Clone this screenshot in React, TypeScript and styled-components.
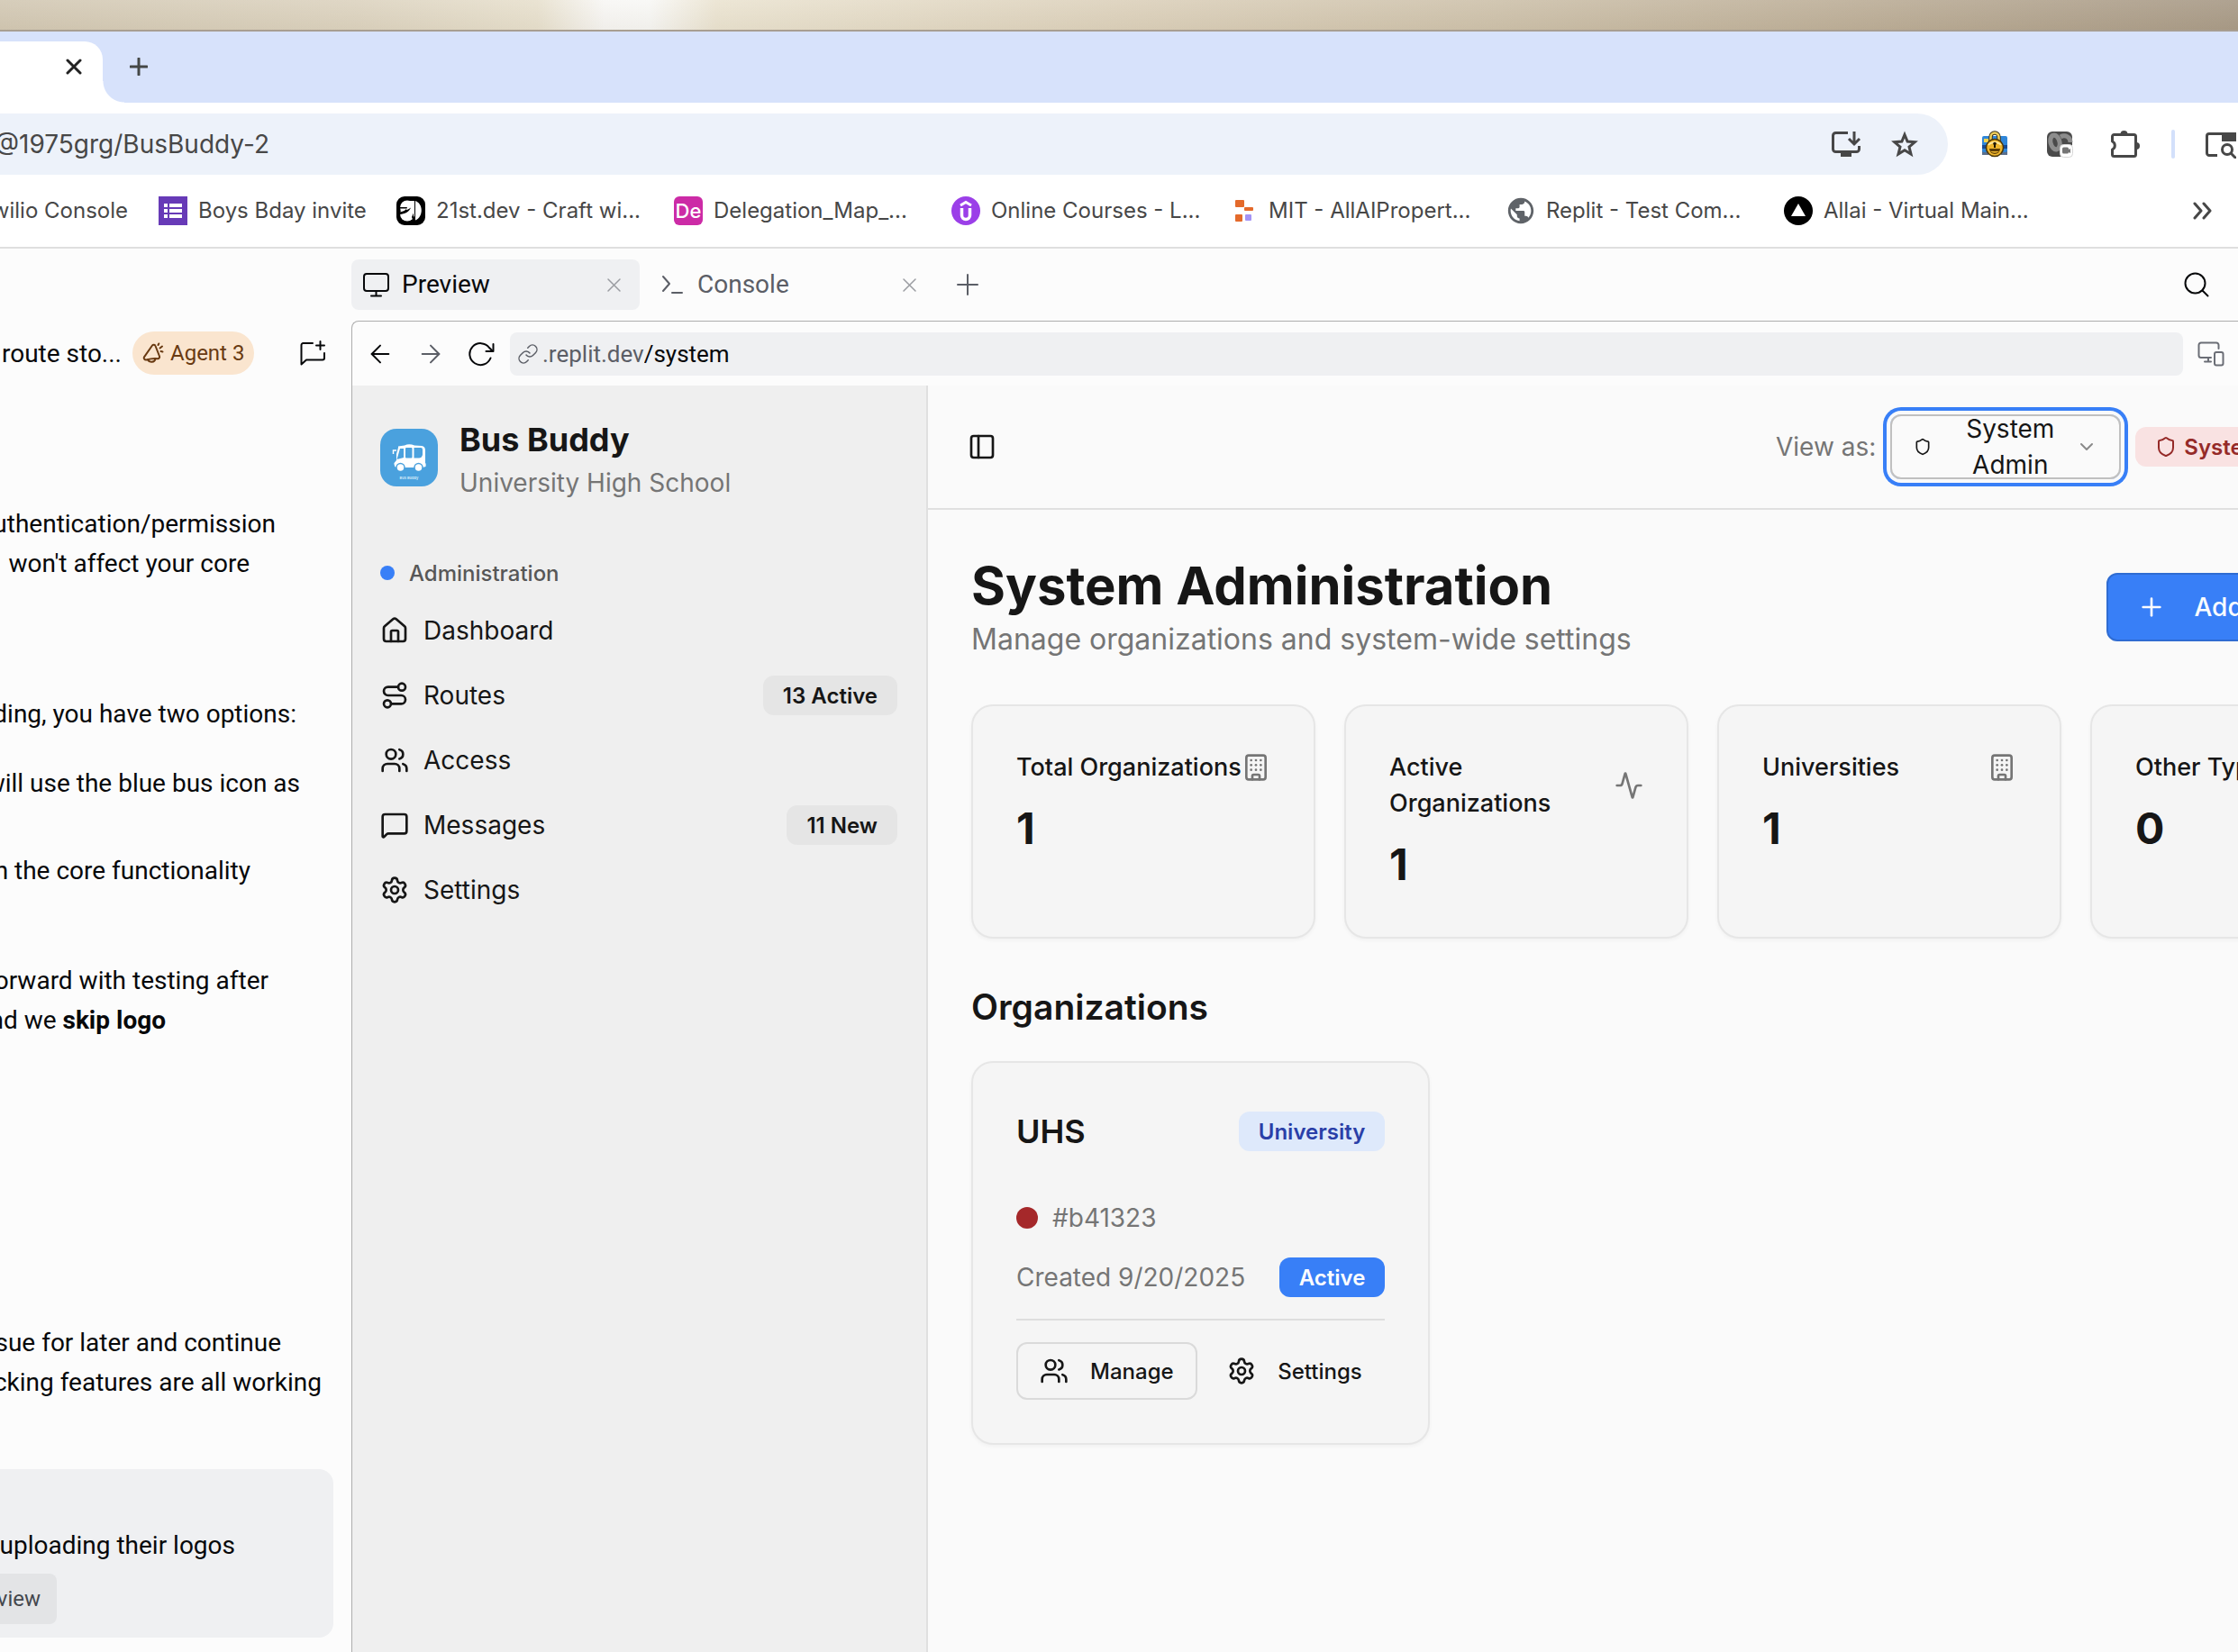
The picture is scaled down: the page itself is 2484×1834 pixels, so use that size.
import React from "react";
import styled, { createGlobalStyle } from "styled-components";
import {
  Activity,
  ArrowLeft,
  ArrowRight,
  Building,
  ChevronDown,
  House,
  MessageSquare,
  PanelLeft,
  Plus,
  Route,
  Settings,
  Shield,
  Users,
} from "lucide-react";
import { MdPublic } from "react-icons/md";

const inter = `Inter, "Liberation Sans", sans-serif`;
const workspaceFont = `Roboto, "Liberation Sans", sans-serif`;

const GlobalStyle = createGlobalStyle`
  *, *::before, *::after { box-sizing: border-box; }
  body { margin: 0; background: #fcfcfc; }
  h1, h2, h3, p, ul { margin: 0; padding: 0; }
  ul { list-style: none; }
  button, input, select { font: inherit; color: inherit; border: 0; padding: 0; margin: 0; background: none; outline: 0; }
  button { cursor: pointer; }
  a { color: inherit; text-decoration: none; }
  svg { display: block; flex: none; }
`;

/* ---------- Browser window ---------- */

const Screen = styled.div`
  display: flex;
  flex-direction: column;
  height: 100vh;
  overflow: hidden;
  font-family: ${inter};
`;

const Desktop = styled.div`
  flex: none;
  height: 35px;
  border-bottom: 2px solid #a89e91;
  background:
    linear-gradient(to bottom, rgba(255, 255, 255, 0.08), rgba(120, 100, 60, 0.06)),
    linear-gradient(
      to right,
      #d3c9b5 0%,
      #ddd4c1 16%,
      #e8e1cf 24%,
      #f8f7f5 27%,
      #f8f8f6 29%,
      #ebe4d2 32%,
      #ddd2bd 50%,
      #cec2ac 67%,
      #bdaf99 83%,
      #a99b88 100%
    );
`;

const TabStrip = styled.div`
  flex: none;
  display: flex;
  align-items: flex-end;
  height: 79px;
  background: #d7e2fb;
`;

const BrowserTab = styled.div`
  position: relative;
  display: flex;
  align-items: center;
  justify-content: flex-end;
  width: 114px;
  height: 68px;
  padding: 0 23px 12px 0;
  border-radius: 0 20px 0 0;
  background: #fff;
  color: #222;

  &::after {
    content: "";
    position: absolute;
    left: 100%;
    bottom: 0;
    width: 24px;
    height: 24px;
    background: radial-gradient(circle at 100% 0, transparent 23px, #fff 24px);
  }
`;

const NewTab = styled.button`
  display: flex;
  height: 68px;
  padding: 18px 0 0 30px;
  color: #444746;
`;

const Toolbar = styled.div`
  flex: none;
  display: flex;
  align-items: center;
  height: 92px;
  background: #fff;
`;

const Omnibox = styled.div`
  flex: 1;
  display: flex;
  align-items: center;
  gap: 32px;
  height: 68px;
  padding-right: 32px;
  margin-right: 36px;
  border-radius: 0 34px 34px 0;
  background: #edf2fa;
  color: #474747;
`;

const AddressInput = styled.input`
  flex: 1;
  min-width: 0;
  text-indent: -6px;
  font-size: 28px;
  line-height: 40px;
`;

const ToolbarIcons = styled.div`
  display: flex;
  align-items: center;
  gap: 40px;
  width: 286px;
  overflow: hidden;
  color: #474747;
`;

const ToolbarDivider = styled.span`
  flex: none;
  width: 4px;
  height: 32px;
  margin: 0 -8px 0 -6px;
  border-radius: 2px;
  background: #d3e0fb;
`;

const Bookmarks = styled.nav`
  flex: none;
  display: flex;
  align-items: center;
  height: 70px;
  padding: 0 28px 12px 0;
  border-bottom: 2px solid #dfdfdf;
  background: #fff;
  color: #474747;
  font-size: 24px;
  line-height: 32px;
`;

const Bookmark = styled.a<{ $width?: number }>`
  flex: none;
  display: flex;
  align-items: center;
  gap: 12px;
  width: ${(p) => p.$width ?? 308}px;
  white-space: nowrap;
`;

const CutBookmark = styled.a`
  flex: none;
  display: flex;
  justify-content: flex-end;
  width: 142px;
  margin-right: 34px;
  overflow: hidden;
  white-space: nowrap;
`;

const Favicon = styled.span<{ $bg?: string; $radius?: number }>`
  flex: none;
  display: flex;
  align-items: center;
  justify-content: center;
  width: 32px;
  height: 32px;
  border-radius: ${(p) => p.$radius ?? 0}px;
  background: ${(p) => p.$bg ?? "transparent"};
  color: #fff;
  font-size: 22px;
  font-weight: 500;
`;

const MoreBookmarks = styled.button`
  margin-left: auto;
  color: #474747;
`;

/* ---------- Workspace ---------- */

const Workspace = styled.div`
  flex: 1;
  display: flex;
  min-height: 0;
  background: #fcfcfc;
  color: #07080a;
  font-family: ${workspaceFont};
`;

const Chat = styled.section`
  flex: none;
  width: 390px;
  padding-top: 92px;
  overflow: hidden;
`;

const ChatHeader = styled.div`
  display: flex;
  align-items: center;
  height: 48px;
  padding-right: 29px;
`;

const ChatTitle = styled.span`
  display: flex;
  justify-content: flex-end;
  width: 135px;
  margin-right: 12px;
  overflow: hidden;
  white-space: nowrap;
  font-size: 28px;
`;

const AgentPill = styled.button`
  display: flex;
  align-items: center;
  gap: 7px;
  height: 48px;
  padding: 0 11px;
  border-radius: 24px;
  background: #fae5cf;
  color: #693a12;
  font-size: 24px;
  white-space: nowrap;
`;

const NewChat = styled.button`
  margin-left: auto;
`;

const Message = styled.p<{ $top: number }>`
  margin-top: ${(p) => p.$top}px;
  font-size: 28px;
  line-height: 44px;
`;

const Line = styled.span<{ $end: number }>`
  display: flex;
  justify-content: flex-end;
  width: ${(p) => p.$end}px;
  overflow: hidden;
  white-space: pre;
`;

const Checkpoint = styled.div`
  width: 370px;
  margin-top: 74px;
  padding: 63px 0 15px;
  border-radius: 0 16px 16px 0;
  background: #eff0f2;
  font-size: 28px;
  line-height: 44px;
`;

const ViewButton = styled.button`
  display: flex;
  align-items: center;
  justify-content: flex-end;
  width: 63px;
  height: 56px;
  margin-top: 9px;
  padding-right: 18px;
  border-radius: 0 8px 8px 0;
  background: #e3e4e6;
  color: #44474d;
  font-size: 24px;
  overflow: hidden;
`;

const Pane = styled.section`
  flex: 1;
  min-width: 0;
  display: flex;
  flex-direction: column;
`;

const PaneTabs = styled.div`
  flex: none;
  display: flex;
  align-items: center;
  height: 80px;
  padding-right: 32px;
`;

const PaneTab = styled.div<{ $active?: boolean }>`
  display: flex;
  align-items: center;
  width: ${(p) => (p.$active ? 320 : 336)}px;
  height: 56px;
  padding: ${(p) => (p.$active ? "0 20px 0 12px" : "0 28px 0 24px")};
  border-radius: 8px;
  background: ${(p) => (p.$active ? "#eff0f2" : "transparent")};
  color: ${(p) => (p.$active ? "#07080a" : "#5b5e66")};
`;

const PaneTabButton = styled.button`
  flex: 1;
  display: flex;
  align-items: center;
  gap: 12px;
  font-size: 28px;
  line-height: 40px;
`;

const CloseButton = styled.button`
  color: #9a9ca1;
`;

const PaneAdd = styled.button`
  margin-left: 16px;
  color: #5b5e66;
`;

const PaneSearch = styled.button`
  margin-left: auto;
`;

const PreviewFrame = styled.div`
  flex: 1;
  min-height: 0;
  display: flex;
  flex-direction: column;
  border: solid #adadad;
  border-width: 1px 0 0 1px;
  border-top-left-radius: 8px;
  overflow: hidden;
`;

const PreviewBar = styled.div`
  flex: none;
  display: flex;
  align-items: center;
  height: 71px;
  padding: 0 15px 0 15px;
`;

const NavButton = styled.button<{ $muted?: boolean }>`
  flex: none;
  display: flex;
  justify-content: center;
  width: 32px;
  margin-right: 24px;
  color: ${(p) => (p.$muted ? "#5b5e66" : "#07080a")};
`;

const UrlBar = styled.label`
  flex: 1;
  display: flex;
  align-items: center;
  height: 48px;
  margin: 0 16px 0 -8px;
  padding-left: 8px;
  border-radius: 8px;
  background: #eff0f2;
  color: #5b5e66;
  font-size: 26px;
  line-height: 36px;
`;

const UrlHost = styled.span`
  margin-left: 4px;
`;

const UrlInput = styled.input`
  flex: 1;
  min-width: 0;
  color: #07080a;
`;

const DeviceButton = styled.button`
  color: #6b6e76;
`;

/* ---------- Bus Buddy app ---------- */

const AppViewport = styled.div`
  flex: 1;
  min-height: 0;
  display: flex;
  overflow: hidden;
  color: #161616;
  font-family: ${inter};
`;

const Sidebar = styled.aside`
  flex: none;
  width: 639px;
  border-right: 2px solid #e0e0e0;
  background: #efefef;
`;

const Brand = styled.div`
  display: flex;
  align-items: center;
  gap: 24px;
  padding: 32px 31px;
`;

const BrandName = styled.h2`
  font-size: 36px;
  line-height: 56px;
  font-weight: 700;
`;

const Muted = styled.p`
  color: #757575;
  font-size: 28px;
  line-height: 40px;
  white-space: nowrap;
`;

const Menu = styled.nav`
  padding: 16px 32px 16px 31px;
`;

const MenuLabel = styled.div`
  display: flex;
  align-items: center;
  gap: 16px;
  height: 64px;
  color: #575757;
  font-size: 24px;
  font-weight: 500;
`;

const Dot = styled.span<{ $size: number; $color: string }>`
  flex: none;
  width: ${(p) => p.$size}px;
  height: ${(p) => p.$size}px;
  border-radius: 50%;
  background: ${(p) => p.$color};
`;

const MenuList = styled.ul`
  display: flex;
  flex-direction: column;
  gap: 8px;
`;

const MenuItem = styled.a`
  display: flex;
  align-items: center;
  gap: 16px;
  height: 64px;
  font-size: 28px;
`;

const Badge = styled.span<{ $tone?: "blue" | "sky" | "red" }>`
  flex: none;
  display: inline-flex;
  align-items: center;
  gap: 8px;
  height: 44px;
  margin-left: auto;
  padding: 0 22px;
  border-radius: 12px;
  font-size: 24px;
  font-weight: 600;
  white-space: nowrap;
  background: ${(p) =>
    p.$tone === "blue" ? "#387ff7" : p.$tone === "sky" ? "#dee9fb" : p.$tone === "red" ? "#f9e2e2" : "#e5e5e5"};
  color: ${(p) =>
    p.$tone === "blue" ? "#fbfcfe" : p.$tone === "sky" ? "#2a3fa8" : p.$tone === "red" ? "#952a28" : "#161616"};
`;

const Main = styled.main`
  flex: 1;
  min-width: 1720px;
  background: #fafafa;
`;

const MainHeader = styled.header`
  display: flex;
  align-items: center;
  justify-content: space-between;
  height: 138px;
  padding: 0 48px 0 44px;
  border-bottom: 2px solid #e0e0e0;
`;

const IconButton = styled.button`
  color: #161616;
`;

const ViewAs = styled.div`
  flex: 0 0 731px;
  display: flex;
  align-items: center;

  ${Badge} {
    margin-left: 16px;
  }
`;

const ViewAsLabel = styled.label`
  margin-right: 16px;
  color: #757575;
  font-size: 28px;
  line-height: 40px;
`;

const SelectBox = styled.div`
  position: relative;
  display: flex;
  align-items: center;
  width: 256px;
  height: 72px;
  padding: 0 24px;
  border: 2px solid #c0c0c0;
  border-radius: 12px;
  box-shadow: 0 0 0 4px #fafafa, 0 0 0 8px #387ff7;
  font-size: 28px;
  line-height: 40px;
`;

const SelectValue = styled.span`
  flex: 1;
  padding-left: 14px;
  text-align: center;
`;

const NativeSelect = styled.select`
  position: absolute;
  inset: 0;
  width: 100%;
  height: 100%;
  opacity: 0;
  cursor: pointer;
`;

const Content = styled.div`
  display: flex;
  flex-direction: column;
  gap: 48px;
  padding: 48px;
`;

const TitleRow = styled.div`
  display: flex;
  align-items: center;
  justify-content: space-between;
`;

const PageTitle = styled.h1`
  font-size: 58px;
  line-height: 72px;
  font-weight: 700;
`;

const Subtitle = styled.p`
  color: #757575;
  font-size: 32px;
  line-height: 48px;
`;

const PrimaryButton = styled.button`
  display: flex;
  align-items: center;
  gap: 31px;
  height: 76px;
  padding: 0 32px;
  border: 2px solid #2f6cd2;
  border-radius: 12px;
  background: #387ff7;
  color: #fbfcfe;
  font-size: 28px;
  font-weight: 500;
  white-space: nowrap;
`;

const Stats = styled.div`
  display: grid;
  grid-template-columns: repeat(4, 1fr);
  gap: 32px;
`;

const Card = styled.article`
  padding: 48px;
  border: 2px solid #e6e6e6;
  border-radius: 24px;
  background: #f5f5f5;
  box-shadow: 0 2px 4px rgba(0, 0, 0, 0.04);
`;

const StatHead = styled.div`
  display: flex;
  align-items: center;
  justify-content: space-between;
  padding-bottom: 16px;
  color: #757575;
`;

const StatTitle = styled.h3`
  color: #161616;
  font-size: 27px;
  line-height: 40px;
  font-weight: 500;
`;

const StatValue = styled.div`
  font-size: 48px;
  line-height: 64px;
  font-weight: 700;
`;

const Section = styled.section`
  display: flex;
  flex-direction: column;
  gap: 32px;
`;

const SectionTitle = styled.h2`
  font-size: 39px;
  line-height: 56px;
  font-weight: 600;
`;

const Orgs = styled.div`
  display: grid;
  grid-template-columns: repeat(3, 1fr);
  gap: 48px;
`;

const OrgHead = styled.div`
  display: flex;
  align-items: center;
  height: 56px;
  margin-bottom: 48px;
`;

const OrgName = styled.h3`
  font-size: 36px;
  line-height: 56px;
  font-weight: 600;
`;

const OrgRow = styled.div`
  display: flex;
  align-items: center;
  gap: 16px;
  margin-bottom: 24px;
`;

const OrgActions = styled.div`
  display: flex;
  gap: 8px;
  padding-top: 24px;
  border-top: 2px solid #dedede;
`;

const ActionButton = styled.button<{ $outline?: boolean }>`
  flex: 1;
  display: flex;
  align-items: center;
  justify-content: center;
  gap: 24px;
  height: 64px;
  border: 2px solid ${(p) => (p.$outline ? "#dadada" : "transparent")};
  border-radius: 12px;
  font-size: 24px;
  font-weight: 500;
`;

/* ---------- Drawings ---------- */

const Stroke = ({ w, h, sw = 2, children }: { w: number; h: number; sw?: number; children: React.ReactNode }) => (
  <svg
    width={w}
    height={h}
    viewBox={`0 0 ${w} ${h}`}
    fill="none"
    stroke="currentColor"
    strokeWidth={sw}
    strokeLinecap="round"
    strokeLinejoin="round"
    aria-hidden="true"
  >
    {children}
  </svg>
);

const Cross = ({ size, sw }: { size: number; sw: number }) => (
  <Stroke w={size} h={size} sw={sw}>
    <path d={`M2 2L${size - 2} ${size - 2}M${size - 2} 2L2 ${size - 2}`} />
  </Stroke>
);

const PlusMark = ({ size, sw }: { size: number; sw: number }) => (
  <Stroke w={size} h={size} sw={sw}>
    <path d={`M${size / 2} 1V${size - 1}M1 ${size / 2}H${size - 1}`} />
  </Stroke>
);

const InstallIcon = () => (
  <svg width="34" height="30" viewBox="0 0 34 30" fill="none" stroke="currentColor" strokeWidth="3" aria-hidden="true">
    <path d="M19 2.5H5.5a3 3 0 0 0-3 3V20.5a3 3 0 0 0 3 3H28.5a3 3 0 0 0 3-3V17" />
    <path d="M11 26.5H23" strokeWidth="5" />
    <path d="M26 1V14.5M20 9L26 15L32 9" />
  </svg>
);

const StarIcon = () => (
  <svg width="32" height="32" viewBox="0 0 32 32" fill="none" stroke="currentColor" strokeWidth="3" aria-hidden="true">
    <path d="M16 5.5L19.1 13.1L27.2 13.8L21 19L23 27L16 22.7L9 27L11 19L4.800 13.8L12.9 13.1z" />
  </svg>
);

const LockCardIcon = () => (
  <svg width="32" height="32" viewBox="0 0 32 32" aria-hidden="true">
    <rect x="2" y="23" width="7" height="5" fill="#5b6f8c" />
    <rect x="23" y="23" width="7" height="5" fill="#5b6f8c" />
    <rect x="2" y="7" width="28" height="18" rx="2" fill="#2f86d8" />
    <rect x="2" y="17" width="28" height="4" fill="#174a94" />
    <rect x="4" y="10" width="5" height="4" fill="#f3d34e" />
    <path d="M11.5 13V8a4.500 4.500 0 0 1 9 0v5" fill="none" stroke="#40341a" strokeWidth="4.500" />
    <path d="M11.5 13V8a4.500 4.500 0 0 1 9 0v5" fill="none" stroke="#f0cf5c" strokeWidth="2.500" />
    <circle cx="16" cy="20" r="9.500" fill="#efb62d" stroke="#4a3508" strokeWidth="1.500" />
    <path d="M10 21h12a6 6 0 0 1-12 0z" fill="#5d3d06" />
    <path d="M11 24a6 4 0 0 0 10 0z" fill="#efb62d" />
    <path d="M9 17a8 6 0 0 1 14 0" fill="none" stroke="#ffe9a0" strokeWidth="2" />
    <circle cx="16" cy="15.500" r="1.800" fill="#1e1604" />
    <rect x="15" y="15" width="2" height="5" fill="#1e1604" />
  </svg>
);

const RecorderIcon = () => (
  <svg width="32" height="32" viewBox="0 0 32 32" aria-hidden="true">
    <rect x="2" y="2" width="28" height="28" rx="6" fill="#4a4a4a" />
    <ellipse cx="11" cy="14" rx="5" ry="8" fill="none" stroke="#8d8d8d" strokeWidth="5" transform="rotate(-14 11 14)" />
    <path d="M17 8c5-3 11 0 11 6" fill="none" stroke="#8d8d8d" strokeWidth="5" />
    <rect x="16.500" y="16.500" width="14" height="14" rx="4" fill="#fff" stroke="#d6d6d6" />
    <rect x="19" y="19.500" width="7" height="7" rx="1.500" fill="#757575" />
    <path d="M26 22l2-1v5l-2-1z" fill="#757575" />
  </svg>
);

const ExtensionIcon = () => (
  <svg width="34" height="32" viewBox="-1 0 34 32" aria-hidden="true">
    <path
      d="M3.500 5.500h22a2 2 0 0 1 2 2v20a2 2 0 0 1-2 2h-22a2 2 0 0 1-2-2v-5.500a5 5 0 0 0 0-9v-5.500a2 2 0 0 1 2-2z"
      fill="none"
      stroke="currentColor"
      strokeWidth="3"
      strokeLinejoin="round"
    />
    <path d="M10.500 5a4 4 0 0 1 8 0z" fill="currentColor" />
    <path d="M28 14a4 4 0 0 1 0 8z" fill="currentColor" />
  </svg>
);

const TabSearchIcon = () => (
  <svg width="36" height="32" viewBox="0 0 36 32" fill="none" stroke="currentColor" strokeWidth="3" aria-hidden="true">
    <path d="M15 28.500H6a2.500 2.500 0 0 1-2.500-2.500V7A2.500 2.500 0 0 1 6 4.500H36" />
    <rect x="20" y="4" width="16" height="9" fill="currentColor" stroke="none" />
    <circle cx="26" cy="22" r="5.500" />
    <path d="M30 26l6 6" />
  </svg>
);

const FormsIcon = () => (
  <svg width="32" height="32" viewBox="0 0 32 32" fill="#fff" aria-hidden="true">
    <path d="M6 8h4v4H6zM12 8h14v4H12zM6 14h4v4H6zM12 14h14v4H12zM6 20h4v4H6zM12 20h14v4H12z" />
  </svg>
);

const TwentyFirstIcon = () => (
  <svg width="32" height="32" viewBox="0 0 32 32" aria-hidden="true">
    <circle cx="12" cy="12.500" r="8" fill="#fff" />
    <circle cx="12" cy="19.500" r="8" fill="#fff" />
    <rect x="12" y="5" width="8" height="17" fill="#fff" />
    <path d="M4 13.500H11.500C10 15.500 8 16.500 4 17.500V20C9 19.500 14 17.500 16 12.500C13 14.500 12 15 11 15L12 12H4z" fill="#000" />
    <path d="M17 23L19 18.500V28z" fill="#000" />
    <path d="M21 5C30 8 30 23 21 26.500z" fill="#fff" />
  </svg>
);

const UdemyIcon = () => (
  <svg width="32" height="32" viewBox="0 0 32 32" fill="none" stroke="#fff" aria-hidden="true">
    <path d="M11.500 13v8a4.500 4.500 0 0 0 9 0v-8" strokeWidth="3.500" />
    <path d="M10 10L16 6.500L22 10" strokeWidth="3" />
  </svg>
);

const BlocksIcon = () => (
  <svg width="32" height="32" viewBox="0 0 32 32" aria-hidden="true">
    <rect x="7" y="4" width="10" height="8" rx="1" fill="#e46a2b" />
    <rect x="17" y="12" width="10" height="4" rx="1" fill="#e46a2b" />
    <rect x="7" y="20" width="8" height="8" rx="1" fill="#e46a2b" />
    <rect x="18" y="20" width="7" height="7" rx="1" fill="#a493f5" />
  </svg>
);

const TriangleIcon = () => (
  <svg width="32" height="32" viewBox="0 0 32 32" fill="#fff" aria-hidden="true">
    <path d="M16 8L24 22H8z" />
  </svg>
);

const MegaphoneIcon = () => (
  <Stroke w={24} h={24} sw={2}>
    <path d="M11 3.500a2 2 0 0 1 3.500.5L19 15.500a2 2 0 0 1-2 2.700C12 17.500 8 18.500 4.500 19.500A2.200 2.200 0 0 1 2 16.300z" />
    <path d="M6 19.500a4.500 4 0 0 0 8.500-1" />
    <path d="M17.500 3l.8-1.500M19.500 6.500L22 4.500M20.500 10l2 .5" />
  </Stroke>
);

const NewChatIcon = () => (
  <Stroke w={28} h={28} sw={2}>
    <path d="M14 3H3.500A2 2 0 0 0 1.500 5V26.500L7 21.500H25A2 2 0 0 0 27 19.500V14" />
    <path d="M22.500 1V10M18 5.500H27" />
  </Stroke>
);

const MonitorIcon = () => (
  <Stroke w={32} h={28} sw={2}>
    <rect x="2" y="2" width="27" height="19" rx="3" />
    <path d="M15.500 21V26M10 26.500H21" />
  </Stroke>
);

const PromptIcon = () => (
  <Stroke w={28} h={24} sw={2}>
    <path d="M2 3L9 11L2 19" />
    <path d="M12 21H23" />
  </Stroke>
);

const ReloadIcon = () => (
  <Stroke w={30} h={28} sw={2}>
    <path d="M25.500 18.500A12 12 0 1 1 24 7L28 11" />
    <path d="M28.500 3V11H20.500" />
  </Stroke>
);

const SearchIcon = () => (
  <Stroke w={28} h={28} sw={2}>
    <circle cx="12.500" cy="12.500" r="11" />
    <path d="M20.500 20.500L26.500 26.500" />
  </Stroke>
);

const LinkGlyph = () => (
  <Stroke w={24} h={24} sw={1.5}>
    <path d="M10 13a5 5 0 0 0 7.540.540l3-3a5 5 0 0 0-7.070-7.070l-1.720 1.710" />
    <path d="M14 11a5 5 0 0 0-7.540-.540l-3 3a5 5 0 0 0 7.070 7.070l1.710-1.710" />
  </Stroke>
);

const DevicesIcon = () => (
  <Stroke w={30} h={28} sw={2}>
    <path d="M15 18H4A2.500 2.500 0 0 1 1.500 15.500V4A2.500 2.500 0 0 1 4 1.500H21A2.500 2.500 0 0 1 23.500 4V8" />
    <path d="M12 18V22M8 22.500H15" />
    <rect x="19" y="12" width="9.500" height="14.500" rx="2" />
  </Stroke>
);

const BusLogo = () => (
  <svg width="64" height="64" viewBox="0 0 64 64" role="img" aria-label="Bus Buddy logo">
    <rect width="64" height="64" rx="18" fill="#4aa1de" />
    <path d="M20 19.500L27 18.500Q32 16 38 18.500L46 19Q50 19.500 50 24V38Q51 38 50.500 42L47 43H18Q15 42 15.500 38L18 35V28L20 21z" fill="#fff" />
    <path d="M18 24H14.500V28" fill="none" stroke="#fff" strokeWidth="1.500" />
    <path d="M22 22H26V32L18.500 34z" fill="#4aa1de" />
    <rect x="28" y="21" width="7.500" height="11.500" rx="1" fill="#4aa1de" />
    <path d="M37.500 21H45Q47 21 47 23V29Q46 32.500 43 32.500H37.500z" fill="#4aa1de" />
    <circle cx="22.500" cy="43" r="4.500" fill="#fff" stroke="#4aa1de" strokeWidth="1.500" />
    <circle cx="42.500" cy="43" r="4.500" fill="#fff" stroke="#4aa1de" strokeWidth="1.500" />
    <text x="32" y="56" textAnchor="middle" fontFamily="Inter, sans-serif" fontSize="4" fontWeight="600" fill="#d8ecf9">
      Bus Buddy
    </text>
  </svg>
);

/* ---------- Page data ---------- */

const menu = [
  { label: "Dashboard", Icon: House, badge: "" },
  { label: "Routes", Icon: Route, badge: "13 Active" },
  { label: "Access", Icon: Users, badge: "" },
  { label: "Messages", Icon: MessageSquare, badge: "11 New" },
  { label: "Settings", Icon: Settings, badge: "" },
];

const stats = [
  { title: "Total Organizations", value: "1", Icon: Building },
  { title: "Active Organizations", value: "1", Icon: Activity },
  { title: "Universities", value: "1", Icon: Building },
  { title: "Other Types", value: "0", Icon: Building },
];

const bookmarks = [
  { label: "Boys Bday invite", width: 264, icon: <Favicon $bg="#673ab7"><FormsIcon /></Favicon> },
  { label: "21st.dev - Craft wi...", icon: <Favicon $bg="#000" $radius={9}><TwentyFirstIcon /></Favicon> },
  { label: "Delegation_Map_...", icon: <Favicon $bg="#cc2ba6" $radius={6}>De</Favicon> },
  { label: "Online Courses - L...", icon: <Favicon $bg="#9b3fe8" $radius={16}><UdemyIcon /></Favicon> },
  { label: "MIT - AllAIPropert...", icon: <Favicon><BlocksIcon /></Favicon> },
  { label: "Replit - Test Com...", icon: <Favicon><MdPublic size={34} color="#5f6368" /></Favicon> },
  { label: "Allai - Virtual Main...", icon: <Favicon $bg="#000" $radius={16}><TriangleIcon /></Favicon> },
];

export default function App() {
  return (
    <Screen>
      <GlobalStyle />
      <Desktop />
      <TabStrip>
        <BrowserTab>
          <button aria-label="Close tab">
            <Cross size={18} sw={3} />
          </button>
        </BrowserTab>
        <NewTab aria-label="New tab">
          <PlusMark size={20} sw={3} />
        </NewTab>
      </TabStrip>
      <Toolbar>
        <Omnibox>
          <AddressInput aria-label="Address" defaultValue="@1975grg/BusBuddy-2" />
          <button aria-label="Install app">
            <InstallIcon />
          </button>
          <button aria-label="Bookmark this page">
            <StarIcon />
          </button>
        </Omnibox>
        <ToolbarIcons>
          <LockCardIcon />
          <RecorderIcon />
          <ExtensionIcon />
          <ToolbarDivider />
          <TabSearchIcon />
        </ToolbarIcons>
      </Toolbar>
      <Bookmarks>
        <CutBookmark href="#">wilio Console</CutBookmark>
        {bookmarks.map((b) => (
          <Bookmark key={b.label} href="#" $width={b.width}>
            {b.icon}
            {b.label}
          </Bookmark>
        ))}
        <MoreBookmarks aria-label="More bookmarks">
          <Stroke w={22} h={20} sw={3}>
            <path d="M2 2L9 10L2 18M12 2L19 10L12 18" />
          </Stroke>
        </MoreBookmarks>
      </Bookmarks>

      <Workspace>
        <Chat>
          <ChatHeader>
            <ChatTitle>route sto...</ChatTitle>
            <AgentPill>
              <MegaphoneIcon />
              Agent 3
            </AgentPill>
            <NewChat aria-label="New chat">
              <NewChatIcon />
            </NewChat>
          </ChatHeader>
          <Message $top={144}>
            <Line $end={306}>uthentication/permission</Line>
            <Line $end={277}> won't affect your core</Line>
          </Message>
          <Message $top={123}>
            <Line $end={329}>ding, you have two options:</Line>
          </Message>
          <Message $top={33}>
            <Line $end={333}>will use the blue bus icon as</Line>
          </Message>
          <Message $top={53}>
            <Line $end={278}>n the core functionality</Line>
          </Message>
          <Message $top={78}>
            <Line $end={298}>orward with testing after</Line>
            <Line $end={184}>
              nd we <b>skip logo</b>
            </Line>
          </Message>
          <Message $top={314}>
            <Line $end={312}>sue for later and continue</Line>
            <Line $end={357}>cking features are all working</Line>
          </Message>
          <Checkpoint>
            <Line $end={261}>uploading their logos</Line>
            <ViewButton>view</ViewButton>
          </Checkpoint>
        </Chat>

        <Pane>
          <PaneTabs>
            <PaneTab $active>
              <PaneTabButton>
                <MonitorIcon />
                Preview
              </PaneTabButton>
              <CloseButton aria-label="Close Preview">
                <Cross size={17} sw={1.5} />
              </CloseButton>
            </PaneTab>
            <PaneTab>
              <PaneTabButton>
                <PromptIcon />
                Console
              </PaneTabButton>
              <CloseButton aria-label="Close Console">
                <Cross size={17} sw={1.5} />
              </CloseButton>
            </PaneTab>
            <PaneAdd aria-label="New pane tab">
              <PlusMark size={24} sw={2} />
            </PaneAdd>
            <PaneSearch aria-label="Search">
              <SearchIcon />
            </PaneSearch>
          </PaneTabs>

          <PreviewFrame>
            <PreviewBar>
              <NavButton aria-label="Back">
                <ArrowLeft size={32} strokeWidth={1.5} />
              </NavButton>
              <NavButton aria-label="Forward" $muted>
                <ArrowRight size={32} strokeWidth={1.5} />
              </NavButton>
              <NavButton aria-label="Reload">
                <ReloadIcon />
              </NavButton>
              <UrlBar>
                <LinkGlyph />
                <UrlHost>.replit.dev</UrlHost>
                <UrlInput aria-label="Path" defaultValue="/system" />
              </UrlBar>
              <DeviceButton aria-label="Device size">
                <DevicesIcon />
              </DeviceButton>
            </PreviewBar>

            <AppViewport>
              <Sidebar>
                <Brand>
                  <BusLogo />
                  <div>
                    <BrandName>Bus Buddy</BrandName>
                    <Muted>University High School</Muted>
                  </div>
                </Brand>
                <Menu>
                  <MenuLabel>
                    <Dot $size={16} $color="#387ff7" />
                    Administration
                  </MenuLabel>
                  <MenuList>
                    {menu.map(({ label, Icon, badge }) => (
                      <li key={label}>
                        <MenuItem href="#">
                          <Icon size={32} />
                          {label}
                          {badge && <Badge>{badge}</Badge>}
                        </MenuItem>
                      </li>
                    ))}
                  </MenuList>
                </Menu>
              </Sidebar>

              <Main>
                <MainHeader>
                  <IconButton aria-label="Toggle sidebar">
                    <PanelLeft size={32} />
                  </IconButton>
                  <ViewAs>
                    <ViewAsLabel htmlFor="role">View as:</ViewAsLabel>
                    <SelectBox>
                      <Shield size={20} />
                      <SelectValue>System Admin</SelectValue>
                      <ChevronDown size={24} color="#8a8a8a" />
                      <NativeSelect id="role" defaultValue="System Admin">
                        <option>System Admin</option>
                      </NativeSelect>
                    </SelectBox>
                    <Badge $tone="red">
                      <Shield size={24} />
                      System Admin
                    </Badge>
                  </ViewAs>
                </MainHeader>

                <Content>
                  <TitleRow>
                    <div>
                      <PageTitle>System Administration</PageTitle>
                      <Subtitle>Manage organizations and system-wide settings</Subtitle>
                    </div>
                    <PrimaryButton>
                      <Plus size={32} />
                      Add Organization
                    </PrimaryButton>
                  </TitleRow>

                  <Stats>
                    {stats.map(({ title, value, Icon }) => (
                      <Card key={title}>
                        <StatHead>
                          <StatTitle>{title}</StatTitle>
                          <Icon size={32} />
                        </StatHead>
                        <StatValue>{value}</StatValue>
                      </Card>
                    ))}
                  </Stats>

                  <Section>
                    <SectionTitle>Organizations</SectionTitle>
                    <Orgs>
                      <Card>
                        <OrgHead>
                          <OrgName>UHS</OrgName>
                          <Badge $tone="sky">University</Badge>
                        </OrgHead>
                        <OrgRow>
                          <Dot $size={24} $color="#a5282a" />
                          <Muted>#b41323</Muted>
                        </OrgRow>
                        <OrgRow>
                          <Muted>Created 9/20/2025</Muted>
                          <Badge $tone="blue">Active</Badge>
                        </OrgRow>
                        <OrgActions>
                          <ActionButton $outline>
                            <Users size={32} />
                            Manage
                          </ActionButton>
                          <ActionButton>
                            <Settings size={32} />
                            Settings
                          </ActionButton>
                        </OrgActions>
                      </Card>
                    </Orgs>
                  </Section>
                </Content>
              </Main>
            </AppViewport>
          </PreviewFrame>
        </Pane>
      </Workspace>
    </Screen>
  );
}
